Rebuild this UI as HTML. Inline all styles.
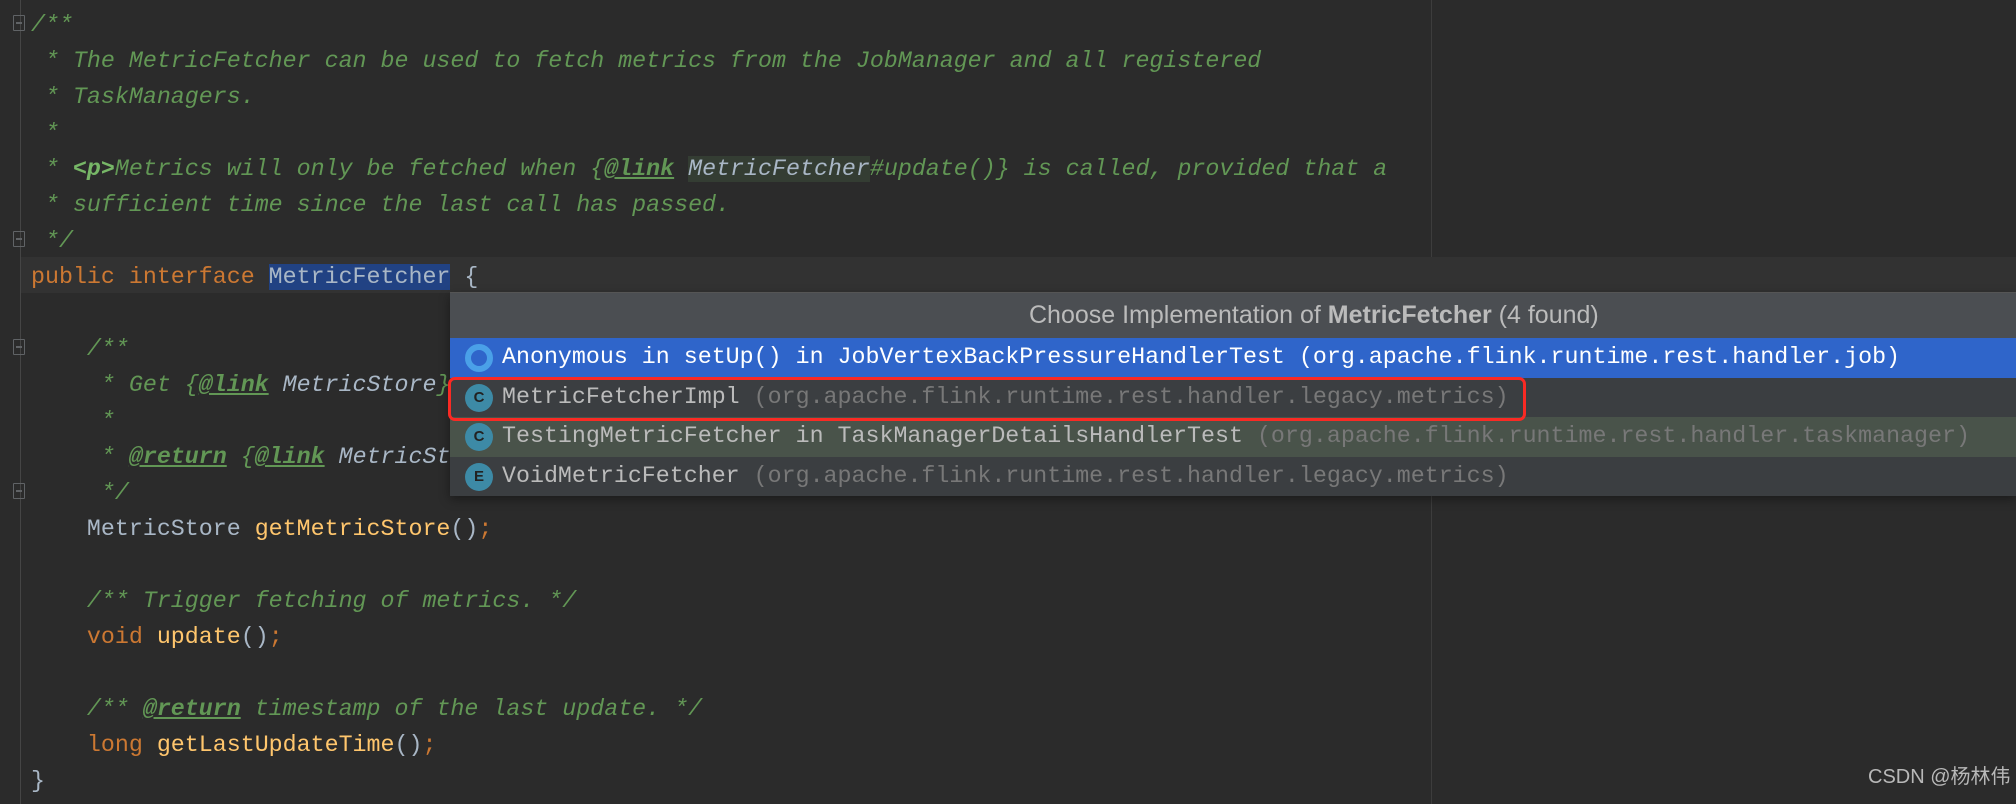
<!DOCTYPE html>
<html><head><meta charset="utf-8"><style>
*{margin:0;padding:0;box-sizing:border-box}
body{width:2016px;height:804px;background:#2b2b2b;position:relative;overflow:hidden;font-family:"Liberation Mono",monospace;}
.gut{position:absolute;left:20px;top:0;width:1px;height:804px;background:#454545}
.guide{position:absolute;left:1431px;top:0;width:1px;height:804px;background:#3d3d3d}
.caret{position:absolute;left:21px;top:257px;width:1995px;height:36px;background:#323232}
.code{position:absolute;left:31px;top:7px;font-size:23.3px;line-height:36px;white-space:pre;color:#a9b7c6}
.c{color:#629755;font-style:italic}
.t{color:#629755;font-style:italic;font-weight:bold;text-decoration:underline}
.p{color:#77b767;font-style:italic;font-weight:bold}
.r{color:#a9b7c6;font-style:italic}
.k{color:#cc7832}
.m{color:#ffc66d}
.fold{position:absolute;left:13px;width:12px;height:16px;border:1.5px solid #606366;border-radius:1px}
.fold:after{content:"";position:absolute;left:2px;top:6px;width:6px;height:1.5px;background:#606366}
.pop{position:absolute;left:450px;top:292px;width:1566px;height:203px;background:#3c3f41;box-shadow:0 4px 10px rgba(0,0,0,.4)}
.hdr{position:absolute;left:0;top:0;width:100%;height:46px;background:#4b4e52;border-top:1px solid #555}
.hdr span{position:absolute;left:579px;top:8px;font-family:"Liberation Sans",sans-serif;font-size:25px;color:#bbbbbb;white-space:nowrap}
.row{position:absolute;left:0;width:100%;height:39.5px;font-size:23.3px;line-height:39px;white-space:pre;color:#bbbbbb}
.row .tx{position:absolute;left:52px;top:0}
.g{color:#787878}
.ic{position:absolute;left:15px;top:6px;width:28px;height:28px;border-radius:50%;background:#3d8aa6;color:#222;font-family:"Liberation Sans",sans-serif;font-size:15px;line-height:28px;text-align:center;font-weight:bold}
.red{position:absolute;left:448px;top:377px;width:1078px;height:44px;border:3.5px solid #fa2a24;border-radius:7px}
.wm{position:absolute;left:1868px;top:760px;font-family:"Liberation Sans","Noto Sans CJK SC",sans-serif;font-size:20px;color:#b8b8b8;white-space:nowrap}
</style></head><body>
<div class="gut"></div>
<div class="guide"></div>
<div class="caret"></div>
<div class="fold" style="top:15px"></div>
<div class="fold" style="top:231px"></div>
<div class="fold" style="top:339px"></div>
<div class="fold" style="top:483px"></div>
<div class="code"><span class="c">/**</span>
<span class="c"> * The MetricFetcher can be used to fetch metrics from the JobManager and all registered</span>
<span class="c"> * TaskManagers.</span>
<span class="c"> *</span>
<span class="c"> * </span><span class="p">&lt;p&gt;</span><span class="c">Metrics will only be fetched when {</span><span class="t">@link</span><span class="c"> </span><span class="r" style="background:#343d33">MetricFetcher</span><span class="c">#update()} is called, provided that a</span>
<span class="c"> * sufficient time since the last call has passed.</span>
<span class="c"> */</span>
<span class="k">public interface </span><span style="background:#214283">MetricFetcher</span> {

    <span class="c">/**</span>
<span class="c">     * Get {</span><span class="t">@link</span><span class="c"> </span><span class="r">MetricStore</span><span class="c">}</span>
<span class="c">     *</span>
<span class="c">     * </span><span class="t">@return</span><span class="c"> {</span><span class="t">@link</span><span class="c"> </span><span class="r">MetricSt</span>
<span class="c">     */</span>
    MetricStore <span class="m">getMetricStore</span>()<span class="k">;</span>

    <span class="c">/** Trigger fetching of metrics. */</span>
    <span class="k">void </span><span class="m">update</span>()<span class="k">;</span>

    <span class="c">/** </span><span class="t">@return</span><span class="c"> timestamp of the last update. */</span>
    <span class="k">long </span><span class="m">getLastUpdateTime</span>()<span class="k">;</span>
}</div>
<div class="pop">
<div class="hdr"><span>Choose Implementation of <b>MetricFetcher</b> (4 found)</span></div>
<div class="row" style="top:46px;background:#2f65ca;color:#fff"><div class="ic" style="border:6px solid #4aa0e8;background:#2f65ca"></div><span class="tx">Anonymous in setUp() in JobVertexBackPressureHandlerTest (org.apache.flink.runtime.rest.handler.job)</span></div>
<div class="row" style="top:85.5px;background:#3b3e41"><div class="ic">C</div><span class="tx">MetricFetcherImpl <span class="g">(org.apache.flink.runtime.rest.handler.legacy.metrics)</span></span></div>
<div class="row" style="top:125px;background:#49534a"><div class="ic">C</div><span class="tx">TestingMetricFetcher in TaskManagerDetailsHandlerTest <span class="g">(org.apache.flink.runtime.rest.handler.taskmanager)</span></span></div>
<div class="row" style="top:164.5px;background:#3b3e41"><div class="ic">E</div><span class="tx">VoidMetricFetcher <span class="g">(org.apache.flink.runtime.rest.handler.legacy.metrics)</span></span></div>
</div>
<div class="red"></div>
<div class="wm">CSDN @杨林伟</div>
</body></html>
